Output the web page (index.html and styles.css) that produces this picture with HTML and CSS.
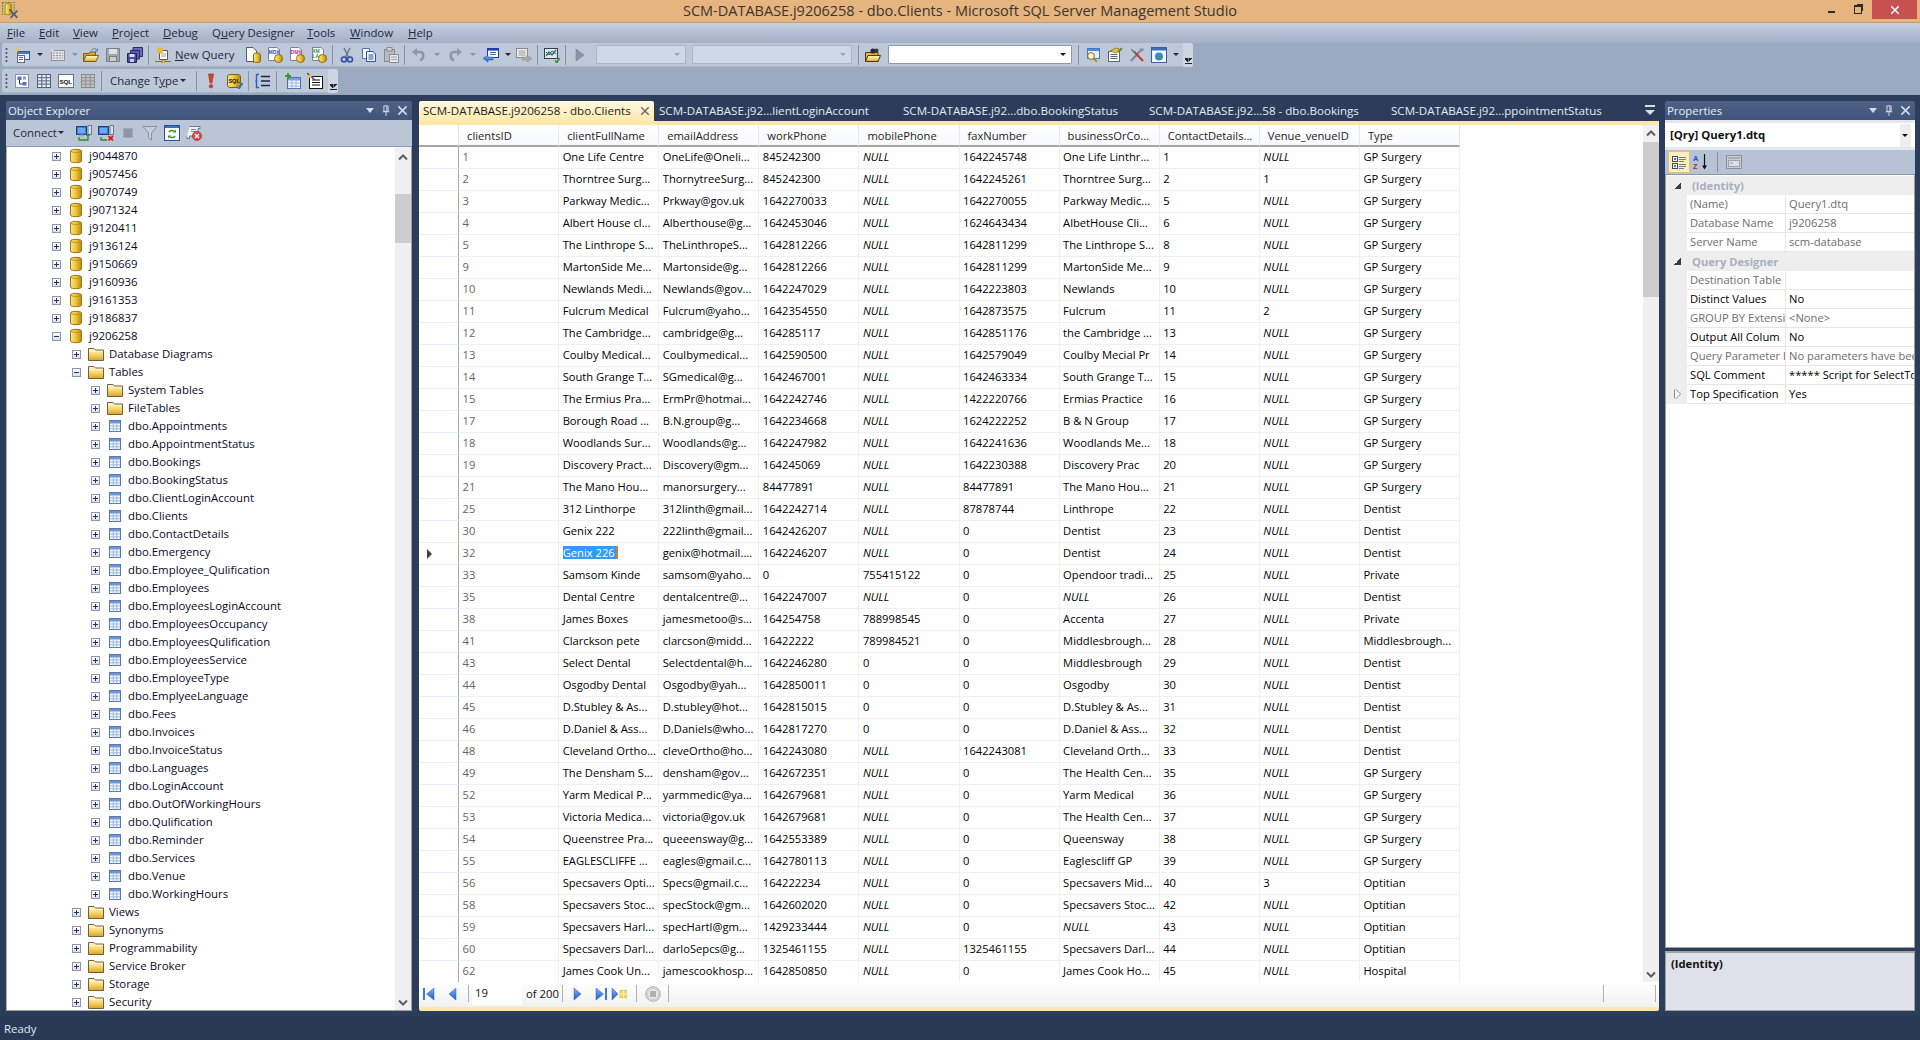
FILE: index.html
```html
<!DOCTYPE html>
<html lang="en">
<head>
<meta charset="utf-8">
<title>SCM-DATABASE.j9206258 - dbo.Clients - Microsoft SQL Server Management Studio</title>
<link rel="stylesheet" href="styles.css">
</head>
<body>
<svg class="defs" xmlns="http://www.w3.org/2000/svg">
<defs>
<linearGradient id="gDb" x1="0" x2="1" y1="0" y2="0"><stop offset="0" stop-color="#f9e88c"/><stop offset=".45" stop-color="#f0c83c"/><stop offset="1" stop-color="#b98a14"/></linearGradient>
<linearGradient id="gFold" x1="0" x2="0" y1="0" y2="1"><stop offset="0" stop-color="#fff8d8"/><stop offset=".5" stop-color="#f8d870"/><stop offset="1" stop-color="#d9a22a"/></linearGradient>
<linearGradient id="gBox" x1="0" x2="0" y1="0" y2="1"><stop offset="0" stop-color="#ffffff"/><stop offset="1" stop-color="#d8dde6"/></linearGradient>
<linearGradient id="gBlue" x1="0" x2="0" y1="0" y2="1"><stop offset="0" stop-color="#7fb0f0"/><stop offset="1" stop-color="#1f5fc8"/></linearGradient>
<symbol id="db" viewBox="0 0 16 16"><path d="M2.5 3C2.5 .8 13.5 .8 13.5 3V13C13.5 15.2 2.5 15.2 2.5 13Z" fill="url(#gDb)" stroke="#9a7818"/><path d="M3 3.2C4.5 5 11.5 5 13 3.2" fill="none" stroke="#b8921e" stroke-width=".8"/></symbol>
<symbol id="folder" viewBox="0 0 16 16"><path d="M.5 2.5H6L7.5 4H15.5V14.5H.5Z" fill="url(#gFold)" stroke="#6f6040"/><path d="M1.5 5.5H14.5" stroke="#fff6c8"/></symbol>
<symbol id="table" viewBox="0 0 16 16"><rect x="2.5" y="2.5" width="11" height="11" fill="#f4f8fe" stroke="#5478b4"/><rect x="3" y="3" width="10" height="2.5" fill="#6f96d6"/><path d="M3 8H13M3 10.8H13M6.3 5.5V13.5M9.8 5.5V13.5" stroke="#9db8e0"/></symbol>
<symbol id="plus" viewBox="0 0 9 9"><rect x=".5" y=".5" width="8" height="8" fill="url(#gBox)" stroke="#8c96a8"/><path d="M2 4.5H7M4.5 2V7" stroke="#25315c"/></symbol>
<symbol id="minus" viewBox="0 0 9 9"><rect x=".5" y=".5" width="8" height="8" fill="url(#gBox)" stroke="#8c96a8"/><path d="M2 4.5H7" stroke="#25315c"/></symbol>
<symbol id="appicon" viewBox="0 0 16 16"><rect x=".5" y=".5" width="11" height="11" fill="none" stroke="#4a9a2a" stroke-dasharray="1.5 1"/><path d="M3 2.5C3 1.3 9 1.3 9 2.5V11C9 12.3 3 12.3 3 11Z" fill="url(#gDb)" stroke="#9a7818" stroke-width=".7"/><path d="M7 7L14.5 15M14.5 8L8 15" stroke="#4f5f78" stroke-width="1.6"/></symbol>
<symbol id="newproj" viewBox="0 0 16 16"><rect x="3.5" y="4.5" width="12" height="8" fill="#e8eef8" stroke="#3a5a90"/><rect x="4" y="5" width="11" height="2" fill="#4a78c4"/><rect x="3.5" y="8.5" width="7" height="7" fill="#fff" stroke="#5c6c84"/><path d="M5 10.5H9M5 12.5H9" stroke="#5c6c84"/><path d="M3 0L4 2.5 6.5 3 4 4 3 6.5 2 4 0 3 2 2.5Z" fill="#f4c430"/></symbol>
<symbol id="gridbox" viewBox="0 0 16 16"><rect x="1.5" y="3.5" width="13" height="10" fill="#e8e8e8" stroke="#808080"/><path d="M3 6H13M3 8.5H13M3 11H13" stroke="#8a8a8a" stroke-dasharray="2 1"/><path d="M2 .5L3 2.5 5 3 3 4 2 5.5 1 4 0 3 1 2.5Z" fill="#d8d8d8"/></symbol>
<symbol id="open" viewBox="0 0 16 16"><path d="M.5 6.5H6L7 5H12.5V14.5H.5Z" fill="#d9a22a" stroke="#7a6020"/><path d="M.5 14.5L3 8.5H15.5L13 14.5Z" fill="url(#gFold)" stroke="#7a6020"/><path d="M8.5 3.5C10 1 13 1 14 3.5M14.5 1.5V4H12" fill="none" stroke="#5a7ab0"/></symbol>
<symbol id="save" viewBox="0 0 16 16"><path d="M1.5 1.5H14.5V14.5H1.5Z" fill="#9a9a9a" stroke="#666"/><rect x="4" y="2" width="8" height="5" fill="#e8e8e8"/><rect x="4.5" y="9.5" width="7" height="5" fill="#d0d0d0" stroke="#666"/></symbol>
<symbol id="saveall" viewBox="0 0 16 16"><path d="M6 .5H15.5V9.5H6Z" fill="#6a6ab8" stroke="#2a2a68"/><path d="M3.5 3.5H12.5V12H3.5Z" fill="#5a5ab0" stroke="#2a2a68"/><path d="M.5 6.5H9.5V15.5H.5Z" fill="#4a4a9c" stroke="#24245c"/><rect x="2.5" y="7" width="5" height="3" fill="#dfe2f2"/><rect x="3" y="12" width="4" height="3" fill="#c8cce4"/></symbol>
<symbol id="newq" viewBox="0 0 16 16"><path d="M4.5 3.5H12.5V12.5H4.5Z" fill="#fff" stroke="#5a5a5a"/><path d="M6 7H11M6 9H11" stroke="#9aa4b4"/><circle cx="5" cy="3.5" r="3" fill="#f4b820"/><path d="M0 14.5H16" stroke="#8a7424"/><rect x="7" y="13" width="3" height="3" fill="#e8c040" stroke="#8a7424" stroke-width=".5"/></symbol>
<symbol id="docdb" viewBox="0 0 16 16"><path d="M1.5 .5H8L11.5 4V14.5H1.5Z" fill="#fff" stroke="#4f5a70"/><path d="M8.5 15.5V7.5C8.5 5.6 15.5 5.6 15.5 7.5V14C15.5 16 8.5 16 8.5 14Z" fill="url(#gDb)" stroke="#8a6a10"/></symbol>
<symbol id="mdx" viewBox="0 0 16 16"><path d="M1.5 .5H10L12.5 3V13.5H1.5Z" fill="#fff" stroke="#7a8498"/><text x="1.6" y="6.5" font-size="5" font-weight="700" fill="#2a50c0" font-family="Liberation Sans">MDX</text><circle cx="11.5" cy="11.5" r="4" fill="url(#gDb)" stroke="#8a6a10"/></symbol>
<symbol id="dmx" viewBox="0 0 16 16"><path d="M1.5 .5H10L12.5 3V13.5H1.5Z" fill="#fff" stroke="#7a8498"/><text x="1.6" y="6.5" font-size="5" font-weight="700" fill="#b030b0" font-family="Liberation Sans">DMX</text><circle cx="11.5" cy="11.5" r="4" fill="url(#gDb)" stroke="#8a6a10"/></symbol>
<symbol id="xmla" viewBox="0 0 16 16"><path d="M1.5 .5H10L12.5 3V13.5H1.5Z" fill="#fff" stroke="#7a8498"/><text x="1.6" y="5.5" font-size="4.6" font-weight="700" fill="#2a9040" font-family="Liberation Sans">XM</text><text x="1.6" y="10.5" font-size="4.6" font-weight="700" fill="#2a9040" font-family="Liberation Sans">LA</text><circle cx="11.5" cy="11.5" r="4" fill="url(#gDb)" stroke="#8a6a10"/></symbol>
<symbol id="cut" viewBox="0 0 16 16"><path d="M5 1L9.5 10M11 1L6.5 10" stroke="#6a7488" stroke-width="1.5"/><circle cx="5" cy="12.5" r="2.5" fill="none" stroke="#2a50a8" stroke-width="1.6"/><circle cx="11" cy="12.5" r="2.5" fill="none" stroke="#2a50a8" stroke-width="1.6"/></symbol>
<symbol id="copy" viewBox="0 0 16 16"><path d="M1.5 1.5H8.5V11.5H1.5Z" fill="#fff" stroke="#4a72b8"/><path d="M5.5 4.5H12L14.5 7V14.5H5.5Z" fill="#f2f6fc" stroke="#2a54a0"/><path d="M7.5 8H12.5M7.5 10H12.5M7.5 12H12.5" stroke="#2a54a0"/></symbol>
<symbol id="paste" viewBox="0 0 16 16"><rect x="1.5" y="2.5" width="10" height="12" fill="#b8b8b8" stroke="#777"/><rect x="4" y=".5" width="5" height="3.5" fill="#d8d8d8" stroke="#777"/><path d="M6.5 7.5H15.5V15.5H6.5Z" fill="#f0f0f0" stroke="#777"/><path d="M8 10H14M8 12.5H14" stroke="#999"/></symbol>
<symbol id="undo" viewBox="0 0 16 16"><path d="M3 5H9.5C13 5 13.5 12 9 13" fill="none" stroke="#8e97a6" stroke-width="2.6"/><path d="M6 1V9L1 5Z" fill="#8e97a6"/></symbol>
<symbol id="redo" viewBox="0 0 16 16"><path d="M13 5H6.5C3 5 2.5 12 7 13" fill="none" stroke="#8e97a6" stroke-width="2.6"/><path d="M10 1V9L15 5Z" fill="#8e97a6"/></symbol>
<symbol id="res" viewBox="0 0 16 16"><rect x="4.5" y="1.5" width="11" height="9" fill="#fff" stroke="#1f3f9c"/><rect x="5" y="2" width="10" height="1.6" fill="#1f3f9c"/><path d="M7 5.5H13M7 7.5H13" stroke="#4a6ab8"/><path d="M0 11.5L5 8V10H10V13H5V15Z" fill="url(#gBlue)" stroke="#1f4fa0" stroke-width=".5"/></symbol>
<symbol id="res2" viewBox="0 0 16 16"><rect x=".5" y="1.5" width="11" height="9" fill="#eee" stroke="#888"/><path d="M2.5 4H9.5M2.5 6H9.5M2.5 8H9.5" stroke="#9a9a9a"/><path d="M16 11.5L11 8V10H6V13H11V15Z" fill="#a8a8a8" stroke="#888" stroke-width=".5"/></symbol>
<symbol id="chart" viewBox="0 0 16 16"><rect x=".5" y="1.5" width="13" height="10" fill="#dfe9f2" stroke="#3a3a5a"/><path d="M2 9L5 5 8 8 12 3" stroke="#2a8030" fill="none" stroke-width="1.4"/><path d="M2 5L5 8 8 4 12 7" stroke="#2a50a0" fill="none"/><path d="M11 13.5L13 15.5 15.5 11" stroke="#3a8a28" fill="none" stroke-width="1.6"/></symbol>
<symbol id="play" viewBox="0 0 16 16"><path d="M4 2L12 8 4 14Z" fill="#8794aa" stroke="#6e7b92" stroke-width=".5"/></symbol>
<symbol id="dbfolder" viewBox="0 0 16 16"><path d="M.5 5.5H13V14.5H.5Z" fill="#e3b23c" stroke="#4a3a14"/><path d="M.5 14.5L3 8.5H15.5L13 14.5Z" fill="url(#gFold)" stroke="#4a3a14"/><circle cx="8" cy="4" r="2.6" fill="#2a2a2a"/><circle cx="11.5" cy="3.5" r="2" fill="#3a3a3a"/></symbol>
<symbol id="find" viewBox="0 0 16 16"><rect x="2.5" y="1.5" width="12" height="10" fill="#e6eefa" stroke="#4a78c4"/><rect x="3" y="2" width="11" height="2" fill="#4a8ce0"/><circle cx="6" cy="9" r="3.4" fill="#fdf5c8" stroke="#7a6a2a"/><path d="M8.5 11.5L12 15" stroke="#b8901e" stroke-width="1.8"/></symbol>
<symbol id="props" viewBox="0 0 16 16"><rect x="1.5" y="4.5" width="11" height="10" fill="#fff" stroke="#5a6478"/><path d="M3.5 7.5H10.5M3.5 9.5H10.5M3.5 11.5H10.5" stroke="#5a6478"/><path d="M3 4L9 1 14.5 3 9 6Z" fill="#e8c030" stroke="#7a6a20" stroke-width=".7"/><path d="M11 5L15 1" stroke="#3a8a28" stroke-width="1.4"/></symbol>
<symbol id="tools" viewBox="0 0 16 16"><path d="M2 14L11 4" stroke="#7c8698" stroke-width="2"/><path d="M10 2.5C11.5 .5 15 1 15 3L12.5 5 11 4.5Z" fill="#8a94a6"/><path d="M14 14L5 4.5" stroke="#c03a2a" stroke-width="2"/><path d="M2 2L6 5 5 6Z" fill="#6e7888" stroke="#6e7888"/></symbol>
<symbol id="globe" viewBox="0 0 16 16"><rect x=".5" y=".5" width="15" height="15" fill="#f4f8fe" stroke="#36619c"/><rect x="1" y="1" width="14" height="2.5" fill="#3a6cc0"/><circle cx="8" cy="9.5" r="4" fill="#3a88d8"/><path d="M6 7.5C8 7 9 9 7.5 10.5 6.5 11.5 8 13 9 13L11 10Z" fill="#3aa038"/></symbol>
<symbol id="diagram" viewBox="0 0 16 16"><rect x="1.5" y="1.5" width="13" height="13" fill="#fff" stroke="#8a94a8"/><rect x="3.5" y="3.5" width="4" height="3.5" fill="#4a78c8"/><rect x="8.5" y="9" width="4" height="3.5" fill="#4a78c8"/><rect x="9" y="3.5" width="3" height="3" fill="#7aa0de"/><path d="M5.5 7V11H8.5" stroke="#334" fill="none"/></symbol>
<symbol id="gridlines" viewBox="0 0 16 16"><rect x="1.5" y="1.5" width="13" height="13" fill="#e6edf8" stroke="#55607a"/><path d="M1.5 4.7H14.5M1.5 7.9H14.5M1.5 11.1H14.5M5.8 1.5V14.5M10.2 1.5V14.5" stroke="#55607a"/></symbol>
<symbol id="sqlbox" viewBox="0 0 16 16"><rect x=".5" y="1.5" width="15" height="13" fill="#fff" stroke="#6a7488"/><text x="1.4" y="10.5" font-size="6.2" font-weight="700" fill="#111" font-family="Liberation Sans">SQL</text></symbol>
<symbol id="gridgrey" viewBox="0 0 16 16"><rect x="1.5" y="1.5" width="13" height="13" fill="#c4c4c4" stroke="#8a8a8a"/><path d="M1.5 4.7H14.5M1.5 7.9H14.5M1.5 11.1H14.5M5.8 1.5V14.5M10.2 1.5V14.5" stroke="#8f8f8f"/></symbol>
<symbol id="bang" viewBox="0 0 16 16"><path d="M5.5 1H10.5L9 10H7Z" fill="#d8402a" stroke="#a02a1a" stroke-width=".6"/><circle cx="8" cy="13.2" r="1.8" fill="#d8402a" stroke="#a02a1a" stroke-width=".5"/></symbol>
<symbol id="sqlcheck" viewBox="0 0 16 16"><rect x=".5" y="1.5" width="13" height="13" rx="2.5" fill="url(#gDb)" stroke="#7a6218"/><text x="1.4" y="10" font-size="5.6" font-weight="700" fill="#111" font-family="Liberation Sans">SQL</text><path d="M10 13L12 15.5 15.5 10" fill="none" stroke="#3a70c8" stroke-width="1.8"/></symbol>
<symbol id="brk" viewBox="0 0 16 16"><path d="M4 1.5H1.5V14.5H4" fill="none" stroke="#2a60c0" stroke-width="1.4"/><path d="M1 8H0" stroke="#2a60c0"/><path d="M6 3.5H15M6 8H15M6 12.5H15" stroke="#15254a" stroke-width="1.4"/></symbol>
<symbol id="addtbl" viewBox="0 0 16 16"><rect x="2.5" y="4.5" width="13" height="11" fill="#f2f7fe" stroke="#4a72b0"/><rect x="3" y="5" width="12" height="2.5" fill="#7aa0dc"/><path d="M3 10H15M3 13H15M7 7.5V15.5M11 7.5V15.5" stroke="#9ab6e0"/><path d="M3 0V6M0 3H6" stroke="#3a9a28" stroke-width="2"/></symbol>
<symbol id="wand" viewBox="0 0 16 16"><rect x="2.5" y="3.5" width="13" height="12" fill="#fff" stroke="#111"/><path d="M5 7H13M5 9.5H13M5 12H13" stroke="#111" stroke-width="1.2"/><path d="M0 0L8 7" stroke="#2a50a8" stroke-width="1.5"/><path d="M3 .5L4 2.5 6 3 4 4 3 6 2 4 0 3 2 2.5Z" fill="#f4c420"/></symbol>
<symbol id="conn" viewBox="0 0 16 16"><rect x=".5" y="1.5" width="10" height="8" fill="#3a80e0" stroke="#1f3f78"/><rect x="2" y="3" width="7" height="5" fill="#6aa8f0"/><rect x="3" y="9.5" width="5" height="2" fill="#98a4b8"/><rect x="12" y=".5" width="3.5" height="9" fill="#d8dee8" stroke="#6e7a90"/><path d="M3 12V15H12V10" fill="none" stroke="#2a8c20" stroke-width="1.3"/><path d="M10 11L12 8.5 14 11" fill="#2a8c20"/></symbol>
<symbol id="disc" viewBox="0 0 16 16"><rect x=".5" y="1.5" width="10" height="8" fill="#3a80e0" stroke="#1f3f78"/><rect x="2" y="3" width="7" height="5" fill="#6aa8f0"/><rect x="12" y=".5" width="3.5" height="9" fill="#d8dee8" stroke="#6e7a90"/><path d="M3 12V15H9" fill="none" stroke="#2a8c20" stroke-width="1.3"/><path d="M10.5 11L15 15.5M15 11L10.5 15.5" stroke="#d8201a" stroke-width="1.8"/></symbol>
<symbol id="stopsq" viewBox="0 0 16 16"><rect x="3.5" y="3.5" width="9" height="9" fill="#8c96a6" stroke="#a0a9b8"/></symbol>
<symbol id="funnel" viewBox="0 0 16 16"><path d="M1 1.5H15L9.5 8V15L6.5 13V8Z" fill="#c8ced8" stroke="#8a919e"/></symbol>
<symbol id="refresh" viewBox="0 0 16 16"><rect x=".5" y=".5" width="15" height="15" fill="#f6f9fe" stroke="#2a5090"/><rect x="1" y="1" width="14" height="2" fill="#3a70c0"/><path d="M5 7C6 5 9 5 10.5 6.5M11 11C10 13 7 13 5.5 11.5" fill="none" stroke="#3a9a20" stroke-width="1.6"/><path d="M9 7.5H12V4.5ZM7 10.5H4V13.5Z" fill="#3a9a20"/></symbol>
<symbol id="scrollx" viewBox="0 0 16 16"><path d="M3.5 1.5H14V3.5H12V11H3.5V13.5H1V11.5" fill="#eef1f6" stroke="#6e7a90"/><path d="M5 4.5H10M5 6.5H10" stroke="#7a869c"/><circle cx="11" cy="11" r="4.6" fill="#d84a4a" stroke="#903030" stroke-width=".6"/><path d="M9 9L13 13M13 9L9 13" stroke="#fff" stroke-width="1.3"/></symbol>
<symbol id="cats" viewBox="0 0 16 16"><rect x="1.5" y="2.5" width="5" height="5" fill="#fff" stroke="#3a4a6a"/><rect x="1.5" y="9.5" width="5" height="5" fill="#fff" stroke="#3a4a6a"/><path d="M3 5H5M4 3.8V6.2M3 12H5M4 10.8V13.2" stroke="#1f3f9c"/><path d="M8 3.5H15M8 5.5H15M8 7.5H13M8 10.5H15M8 12.5H15M8 14.5H13" stroke="#707a8e"/></symbol>
<symbol id="az" viewBox="0 0 16 16"><text x="0" y="7" font-size="7.5" font-weight="700" fill="#2a50c0" font-family="Liberation Sans">A</text><text x="0" y="15" font-size="7.5" font-weight="700" fill="#b02a30" font-family="Liberation Sans">Z</text><path d="M11.5 0V14" stroke="#111" stroke-width="1.2"/><path d="M9 11.5L11.5 15.5 14 11.5Z" fill="#111"/></symbol>
<symbol id="page" viewBox="0 0 16 16"><rect x=".5" y="1.5" width="15" height="13" fill="#c9cdd4" stroke="#8a8f98"/><rect x="2" y="3" width="12" height="2" fill="#a8adb6"/><rect x="2.5" y="6.5" width="11" height="6" fill="#dcdfe4" stroke="#9a9fa8"/><path d="M4 9H7" stroke="#8a8f98"/></symbol>
<symbol id="first" viewBox="0 0 16 16"><rect x="2" y="2" width="2" height="12" fill="#3a7ae0"/><path d="M13 2V14L5.5 8Z" fill="url(#gBlue)" stroke="#2a5cb8" stroke-width=".5"/></symbol>
<symbol id="prev" viewBox="0 0 16 16"><path d="M11 2V14L4 8Z" fill="url(#gBlue)" stroke="#2a5cb8" stroke-width=".5"/></symbol>
<symbol id="next" viewBox="0 0 16 16"><path d="M5 2V14L12 8Z" fill="url(#gBlue)" stroke="#2a5cb8" stroke-width=".5"/></symbol>
<symbol id="last" viewBox="0 0 16 16"><path d="M3 2V14L10.5 8Z" fill="url(#gBlue)" stroke="#2a5cb8" stroke-width=".5"/><rect x="12" y="2" width="2" height="12" fill="#3a7ae0"/></symbol>
<symbol id="newrow" viewBox="0 0 16 16"><path d="M1 2V14L7 8Z" fill="url(#gBlue)" stroke="#2a5cb8" stroke-width=".5"/><rect x="9" y="4.5" width="7" height="7" fill="#f4d860" stroke="#e8c840"/><path d="M9 8H16M12.5 4.5V11.5" stroke="#fff6c0"/></symbol>
<symbol id="stopc" viewBox="0 0 16 16"><circle cx="8" cy="8" r="7.3" fill="#e4e4e4" stroke="#a8a8a8"/><circle cx="8" cy="8" r="5.4" fill="#ececec" stroke="#c4c4c4"/><rect x="5" y="5" width="6" height="6" fill="#b0b0b0"/></symbol>
<symbol id="chev" viewBox="0 0 16 16"><path d="M4 10.5L8 6.5 12 10.5" fill="none" stroke="#5f5f5f" stroke-width="2"/></symbol>
<symbol id="chevd" viewBox="0 0 16 16"><path d="M4 6.5L8 10.5 12 6.5" fill="none" stroke="#5f5f5f" stroke-width="2"/></symbol>
<symbol id="pin" viewBox="0 0 12 14"><path d="M3.5 1.5H8.5V8H3.5ZM2 8.5H10M6 9V13.5M7 2V8" fill="none" stroke="currentColor" stroke-width="1.2"/></symbol>
<symbol id="closex" viewBox="0 0 12 12"><path d="M1.5 1.5L10.5 10.5M10.5 1.5L1.5 10.5" stroke="currentColor" stroke-width="1.7"/></symbol>
</defs>
</svg>

<header class="titlebar">
  <svg class="appicon"><use href="#appicon"/></svg>
  <div class="title">SCM-DATABASE.j9206258 - dbo.Clients - Microsoft SQL Server Management Studio</div>
  <div class="winctl">
    <span class="wmin"></span>
    <span class="wmax"></span>
    <span class="wclose"><svg class="i10"><use href="#closex"/></svg></span>
  </div>
</header>

<nav class="menubar">
  <span class="mi m1"><u>F</u>ile</span>
  <span class="mi m2"><u>E</u>dit</span>
  <span class="mi m3"><u>V</u>iew</span>
  <span class="mi m4"><u>P</u>roject</span>
  <span class="mi m5"><u>D</u>ebug</span>
  <span class="mi m6">Q<u>u</u>ery Designer</span>
  <span class="mi m7"><u>T</u>ools</span>
  <span class="mi m8"><u>W</u>indow</span>
  <span class="mi m9"><u>H</u>elp</span>
</nav>

<section class="toolarea">
  <div class="toolbar tb1">
    <span class="grip"></span>
    <span class="btn"><svg class="i16"><use href="#newproj"/></svg></span><span class="arr"></span>
    <span class="btn dis"><svg class="i16"><use href="#gridbox"/></svg></span><span class="arr narrow off"></span>
    <span class="btn"><svg class="i16"><use href="#open"/></svg></span>
    <span class="btn dis"><svg class="i16"><use href="#save"/></svg></span>
    <span class="btn"><svg class="i16"><use href="#saveall"/></svg></span>
    <span class="sep"></span>
    <span class="btn"><svg class="i16"><use href="#newq"/></svg></span>
    <span class="tlabel newq"><u>N</u>ew Query</span>
    <span class="btn"><svg class="i16"><use href="#docdb"/></svg></span>
    <span class="btn"><svg class="i16"><use href="#mdx"/></svg></span>
    <span class="btn"><svg class="i16"><use href="#dmx"/></svg></span>
    <span class="btn"><svg class="i16"><use href="#xmla"/></svg></span>
    <span class="sep"></span>
    <span class="btn"><svg class="i16"><use href="#cut"/></svg></span>
    <span class="btn"><svg class="i16"><use href="#copy"/></svg></span>
    <span class="btn dis"><svg class="i16"><use href="#paste"/></svg></span>
    <span class="sep"></span>
    <span class="btn"><svg class="i16"><use href="#undo"/></svg></span><span class="arr off"></span>
    <span class="btn"><svg class="i16"><use href="#redo"/></svg></span><span class="arr off"></span>
    <span class="btn"><svg class="i16"><use href="#res"/></svg></span><span class="arr narrow"></span>
    <span class="btn"><svg class="i16"><use href="#res2"/></svg></span>
    <span class="sep"></span>
    <span class="btn"><svg class="i16"><use href="#chart"/></svg></span>
    <span class="sep"></span>
    <span class="btn"><svg class="i16"><use href="#play"/></svg></span>
    <span class="combo c1"><span class="carr off"></span></span>
    <span class="combo c2"><span class="carr off"></span></span>
    <span class="sep"></span>
    <span class="btn"><svg class="i16"><use href="#dbfolder"/></svg></span>
    <span class="combo c3"><span class="carr"></span></span>
    <span class="sep"></span>
    <span class="btn"><svg class="i16"><use href="#find"/></svg></span>
    <span class="btn"><svg class="i16"><use href="#props"/></svg></span>
    <span class="btn"><svg class="i16"><use href="#tools"/></svg></span>
    <span class="btn"><svg class="i16"><use href="#globe"/></svg></span><span class="arr narrow"></span>
    <span class="chevend"></span>
  </div>
  <div class="toolbar tb2">
    <span class="grip"></span>
    <span class="btn"><svg class="i16"><use href="#diagram"/></svg></span>
    <span class="btn"><svg class="i16"><use href="#gridlines"/></svg></span>
    <span class="btn"><svg class="i16"><use href="#sqlbox"/></svg></span>
    <span class="btn"><svg class="i16"><use href="#gridgrey"/></svg></span>
    <span class="sep"></span>
    <span class="tlabel ctype">Change T<u>y</u>pe<span class="arr inl"></span></span>
    <span class="sep"></span>
    <span class="btn"><svg class="i16"><use href="#bang"/></svg></span>
    <span class="btn gapl"><svg class="i16"><use href="#sqlcheck"/></svg></span>
    <span class="sep"></span>
    <span class="btn"><svg class="i16"><use href="#brk"/></svg></span>
    <span class="sep"></span>
    <span class="btn gapl"><svg class="i16"><use href="#addtbl"/></svg></span>
    <span class="btn"><svg class="i16"><use href="#wand"/></svg></span>
    <span class="chevend"></span>
  </div>
</section>

<main class="dock">
  <aside class="panel oe">
    <div class="phead"><span class="ptitle">Object Explorer</span><span class="pctl"><span class="darr"></span><svg class="ipin"><use href="#pin"/></svg><svg class="ix"><use href="#closex"/></svg></span></div>
    <div class="ptools">
      <span class="tlabel conn">Connect<span class="arr inl"></span></span>
      <span class="pbtn"><svg class="i16"><use href="#conn"/></svg></span>
      <span class="pbtn"><svg class="i16"><use href="#disc"/></svg></span>
      <span class="pbtn"><svg class="i16"><use href="#stopsq"/></svg></span>
      <span class="pbtn"><svg class="i16"><use href="#funnel"/></svg></span>
      <span class="pbtn"><svg class="i16"><use href="#refresh"/></svg></span>
      <span class="pbtn"><svg class="i16"><use href="#scrollx"/></svg></span>
    </div>
    <div class="treewrap">
      <div class="tree">
        <div class="tr d1"><svg class="exp"><use href="#plus"/></svg><svg class="i16"><use href="#db"/></svg><span>j9044870</span></div>
        <div class="tr d1"><svg class="exp"><use href="#plus"/></svg><svg class="i16"><use href="#db"/></svg><span>j9057456</span></div>
        <div class="tr d1"><svg class="exp"><use href="#plus"/></svg><svg class="i16"><use href="#db"/></svg><span>j9070749</span></div>
        <div class="tr d1"><svg class="exp"><use href="#plus"/></svg><svg class="i16"><use href="#db"/></svg><span>j9071324</span></div>
        <div class="tr d1"><svg class="exp"><use href="#plus"/></svg><svg class="i16"><use href="#db"/></svg><span>j9120411</span></div>
        <div class="tr d1"><svg class="exp"><use href="#plus"/></svg><svg class="i16"><use href="#db"/></svg><span>j9136124</span></div>
        <div class="tr d1"><svg class="exp"><use href="#plus"/></svg><svg class="i16"><use href="#db"/></svg><span>j9150669</span></div>
        <div class="tr d1"><svg class="exp"><use href="#plus"/></svg><svg class="i16"><use href="#db"/></svg><span>j9160936</span></div>
        <div class="tr d1"><svg class="exp"><use href="#plus"/></svg><svg class="i16"><use href="#db"/></svg><span>j9161353</span></div>
        <div class="tr d1"><svg class="exp"><use href="#plus"/></svg><svg class="i16"><use href="#db"/></svg><span>j9186837</span></div>
        <div class="tr d1"><svg class="exp"><use href="#minus"/></svg><svg class="i16"><use href="#db"/></svg><span>j9206258</span></div>
        <div class="tr d2"><svg class="exp"><use href="#plus"/></svg><svg class="i16"><use href="#folder"/></svg><span>Database Diagrams</span></div>
        <div class="tr d2"><svg class="exp"><use href="#minus"/></svg><svg class="i16"><use href="#folder"/></svg><span>Tables</span></div>
        <div class="tr d3"><svg class="exp"><use href="#plus"/></svg><svg class="i16"><use href="#folder"/></svg><span>System Tables</span></div>
        <div class="tr d3"><svg class="exp"><use href="#plus"/></svg><svg class="i16"><use href="#folder"/></svg><span>FileTables</span></div>
        <div class="tr d3"><svg class="exp"><use href="#plus"/></svg><svg class="i16"><use href="#table"/></svg><span>dbo.Appointments</span></div>
        <div class="tr d3"><svg class="exp"><use href="#plus"/></svg><svg class="i16"><use href="#table"/></svg><span>dbo.AppointmentStatus</span></div>
        <div class="tr d3"><svg class="exp"><use href="#plus"/></svg><svg class="i16"><use href="#table"/></svg><span>dbo.Bookings</span></div>
        <div class="tr d3"><svg class="exp"><use href="#plus"/></svg><svg class="i16"><use href="#table"/></svg><span>dbo.BookingStatus</span></div>
        <div class="tr d3"><svg class="exp"><use href="#plus"/></svg><svg class="i16"><use href="#table"/></svg><span>dbo.ClientLoginAccount</span></div>
        <div class="tr d3"><svg class="exp"><use href="#plus"/></svg><svg class="i16"><use href="#table"/></svg><span>dbo.Clients</span></div>
        <div class="tr d3"><svg class="exp"><use href="#plus"/></svg><svg class="i16"><use href="#table"/></svg><span>dbo.ContactDetails</span></div>
        <div class="tr d3"><svg class="exp"><use href="#plus"/></svg><svg class="i16"><use href="#table"/></svg><span>dbo.Emergency</span></div>
        <div class="tr d3"><svg class="exp"><use href="#plus"/></svg><svg class="i16"><use href="#table"/></svg><span>dbo.Employee_Qulification</span></div>
        <div class="tr d3"><svg class="exp"><use href="#plus"/></svg><svg class="i16"><use href="#table"/></svg><span>dbo.Employees</span></div>
        <div class="tr d3"><svg class="exp"><use href="#plus"/></svg><svg class="i16"><use href="#table"/></svg><span>dbo.EmployeesLoginAccount</span></div>
        <div class="tr d3"><svg class="exp"><use href="#plus"/></svg><svg class="i16"><use href="#table"/></svg><span>dbo.EmployeesOccupancy</span></div>
        <div class="tr d3"><svg class="exp"><use href="#plus"/></svg><svg class="i16"><use href="#table"/></svg><span>dbo.EmployeesQulification</span></div>
        <div class="tr d3"><svg class="exp"><use href="#plus"/></svg><svg class="i16"><use href="#table"/></svg><span>dbo.EmployeesService</span></div>
        <div class="tr d3"><svg class="exp"><use href="#plus"/></svg><svg class="i16"><use href="#table"/></svg><span>dbo.EmployeeType</span></div>
        <div class="tr d3"><svg class="exp"><use href="#plus"/></svg><svg class="i16"><use href="#table"/></svg><span>dbo.EmplyeeLanguage</span></div>
        <div class="tr d3"><svg class="exp"><use href="#plus"/></svg><svg class="i16"><use href="#table"/></svg><span>dbo.Fees</span></div>
        <div class="tr d3"><svg class="exp"><use href="#plus"/></svg><svg class="i16"><use href="#table"/></svg><span>dbo.Invoices</span></div>
        <div class="tr d3"><svg class="exp"><use href="#plus"/></svg><svg class="i16"><use href="#table"/></svg><span>dbo.InvoiceStatus</span></div>
        <div class="tr d3"><svg class="exp"><use href="#plus"/></svg><svg class="i16"><use href="#table"/></svg><span>dbo.Languages</span></div>
        <div class="tr d3"><svg class="exp"><use href="#plus"/></svg><svg class="i16"><use href="#table"/></svg><span>dbo.LoginAccount</span></div>
        <div class="tr d3"><svg class="exp"><use href="#plus"/></svg><svg class="i16"><use href="#table"/></svg><span>dbo.OutOfWorkingHours</span></div>
        <div class="tr d3"><svg class="exp"><use href="#plus"/></svg><svg class="i16"><use href="#table"/></svg><span>dbo.Qulification</span></div>
        <div class="tr d3"><svg class="exp"><use href="#plus"/></svg><svg class="i16"><use href="#table"/></svg><span>dbo.Reminder</span></div>
        <div class="tr d3"><svg class="exp"><use href="#plus"/></svg><svg class="i16"><use href="#table"/></svg><span>dbo.Services</span></div>
        <div class="tr d3"><svg class="exp"><use href="#plus"/></svg><svg class="i16"><use href="#table"/></svg><span>dbo.Venue</span></div>
        <div class="tr d3"><svg class="exp"><use href="#plus"/></svg><svg class="i16"><use href="#table"/></svg><span>dbo.WorkingHours</span></div>
        <div class="tr d2"><svg class="exp"><use href="#plus"/></svg><svg class="i16"><use href="#folder"/></svg><span>Views</span></div>
        <div class="tr d2"><svg class="exp"><use href="#plus"/></svg><svg class="i16"><use href="#folder"/></svg><span>Synonyms</span></div>
        <div class="tr d2"><svg class="exp"><use href="#plus"/></svg><svg class="i16"><use href="#folder"/></svg><span>Programmability</span></div>
        <div class="tr d2"><svg class="exp"><use href="#plus"/></svg><svg class="i16"><use href="#folder"/></svg><span>Service Broker</span></div>
        <div class="tr d2"><svg class="exp"><use href="#plus"/></svg><svg class="i16"><use href="#folder"/></svg><span>Storage</span></div>
        <div class="tr d2"><svg class="exp"><use href="#plus"/></svg><svg class="i16"><use href="#folder"/></svg><span>Security</span></div>
      </div>
      <div class="sbar sb-oe"><svg class="i16"><use href="#chev"/></svg><span class="thumb"></span><span class="grow"></span><svg class="i16"><use href="#chevd"/></svg></div>
    </div>
  </aside>

  <section class="doc">
    <div class="tabs">
      <div class="tab active"><span>SCM-DATABASE.j9206258 - dbo.Clients</span><svg class="tabx"><use href="#closex"/></svg></div>
      <div class="tab">SCM-DATABASE.j92...lientLoginAccount</div>
      <div class="tab">SCM-DATABASE.j92...dbo.BookingStatus</div>
      <div class="tab">SCM-DATABASE.j92...58 - dbo.Bookings</div>
      <div class="tab">SCM-DATABASE.j92...ppointmentStatus</div>
      <span class="tabmenu"></span>
    </div>
    <div class="band"></div>
    <div class="gridwrap">
      <div class="gridscroll">
        <table class="grid">
          <thead><tr><th class="rh"></th><th>clientsID</th><th>clientFullName</th><th>emailAddress</th><th>workPhone</th><th>mobilePhone</th><th>faxNumber</th><th>businessOrCo...</th><th>ContactDetails...</th><th>Venue_venueID</th><th>Type</th></tr></thead>
          <tbody>
            <tr><td class="rh"></td><td class="id">1</td><td>One Life Centre</td><td>OneLife@Oneli...</td><td>845242300</td><td class="n">NULL</td><td>1642245748</td><td>One Life Linthr...</td><td>1</td><td class="n">NULL</td><td>GP Surgery</td></tr>
            <tr><td class="rh"></td><td class="id">2</td><td>Thorntree Surg...</td><td>ThornytreeSurg...</td><td>845242300</td><td class="n">NULL</td><td>1642245261</td><td>Thorntree Surg...</td><td>2</td><td>1</td><td>GP Surgery</td></tr>
            <tr><td class="rh"></td><td class="id">3</td><td>Parkway Medic...</td><td>Prkway@gov.uk</td><td>1642270033</td><td class="n">NULL</td><td>1642270055</td><td>Parkway Medic...</td><td>5</td><td class="n">NULL</td><td>GP Surgery</td></tr>
            <tr><td class="rh"></td><td class="id">4</td><td>Albert House cl...</td><td>Alberthouse@g...</td><td>1642453046</td><td class="n">NULL</td><td>1624643434</td><td>AlbetHouse Cli...</td><td>6</td><td class="n">NULL</td><td>GP Surgery</td></tr>
            <tr><td class="rh"></td><td class="id">5</td><td>The Linthrope S...</td><td>TheLinthropeS...</td><td>1642812266</td><td class="n">NULL</td><td>1642811299</td><td>The Linthrope S...</td><td>8</td><td class="n">NULL</td><td>GP Surgery</td></tr>
            <tr><td class="rh"></td><td class="id">9</td><td>MartonSide Me...</td><td>Martonside@g...</td><td>1642812266</td><td class="n">NULL</td><td>1642811299</td><td>MartonSide Me...</td><td>9</td><td class="n">NULL</td><td>GP Surgery</td></tr>
            <tr><td class="rh"></td><td class="id">10</td><td>Newlands Medi...</td><td>Newlands@gov...</td><td>1642247029</td><td class="n">NULL</td><td>1642223803</td><td>Newlands</td><td>10</td><td class="n">NULL</td><td>GP Surgery</td></tr>
            <tr><td class="rh"></td><td class="id">11</td><td>Fulcrum Medical</td><td>Fulcrum@yaho...</td><td>1642354550</td><td class="n">NULL</td><td>1642873575</td><td>Fulcrum</td><td>11</td><td>2</td><td>GP Surgery</td></tr>
            <tr><td class="rh"></td><td class="id">12</td><td>The Cambridge...</td><td>cambridge@g...</td><td>164285117</td><td class="n">NULL</td><td>1642851176</td><td>the Cambridge ...</td><td>13</td><td class="n">NULL</td><td>GP Surgery</td></tr>
            <tr><td class="rh"></td><td class="id">13</td><td>Coulby Medical...</td><td>Coulbymedical...</td><td>1642590500</td><td class="n">NULL</td><td>1642579049</td><td>Coulby Mecial Pr</td><td>14</td><td class="n">NULL</td><td>GP Surgery</td></tr>
            <tr><td class="rh"></td><td class="id">14</td><td>South Grange T...</td><td>SGmedical@g...</td><td>1642467001</td><td class="n">NULL</td><td>1642463334</td><td>South Grange T...</td><td>15</td><td class="n">NULL</td><td>GP Surgery</td></tr>
            <tr><td class="rh"></td><td class="id">15</td><td>The Ermius Pra...</td><td>ErmPr@hotmai...</td><td>1642242746</td><td class="n">NULL</td><td>1422220766</td><td>Ermias Practice</td><td>16</td><td class="n">NULL</td><td>GP Surgery</td></tr>
            <tr><td class="rh"></td><td class="id">17</td><td>Borough Road ...</td><td>B.N.group@g...</td><td>1642234668</td><td class="n">NULL</td><td>1624222252</td><td>B &amp; N Group</td><td>17</td><td class="n">NULL</td><td>GP Surgery</td></tr>
            <tr><td class="rh"></td><td class="id">18</td><td>Woodlands Sur...</td><td>Woodlands@g...</td><td>1642247982</td><td class="n">NULL</td><td>1642241636</td><td>Woodlands Me...</td><td>18</td><td class="n">NULL</td><td>GP Surgery</td></tr>
            <tr><td class="rh"></td><td class="id">19</td><td>Discovery Pract...</td><td>Discovery@gm...</td><td>164245069</td><td class="n">NULL</td><td>1642230388</td><td>Discovery Prac</td><td>20</td><td class="n">NULL</td><td>GP Surgery</td></tr>
            <tr><td class="rh"></td><td class="id">21</td><td>The Mano Hou...</td><td>manorsurgery...</td><td>84477891</td><td class="n">NULL</td><td>84477891</td><td>The Mano Hou...</td><td>21</td><td class="n">NULL</td><td>GP Surgery</td></tr>
            <tr><td class="rh"></td><td class="id">25</td><td>312 Linthorpe</td><td>312linth@gmail...</td><td>1642242714</td><td class="n">NULL</td><td>87878744</td><td>Linthrope</td><td>22</td><td class="n">NULL</td><td>Dentist</td></tr>
            <tr><td class="rh"></td><td class="id">30</td><td>Genix 222</td><td>222linth@gmail...</td><td>1642426207</td><td class="n">NULL</td><td>0</td><td>Dentist</td><td>23</td><td class="n">NULL</td><td>Dentist</td></tr>
            <tr><td class="rh cur"><span class="rowarrow"></span></td><td class="id">32</td><td><span class="sel">Genix 226</span></td><td>genix@hotmail....</td><td>1642246207</td><td class="n">NULL</td><td>0</td><td>Dentist</td><td>24</td><td class="n">NULL</td><td>Dentist</td></tr>
            <tr><td class="rh"></td><td class="id">33</td><td>Samsom Kinde</td><td>samsom@yaho...</td><td>0</td><td>755415122</td><td>0</td><td>Opendoor tradi...</td><td>25</td><td class="n">NULL</td><td>Private</td></tr>
            <tr><td class="rh"></td><td class="id">35</td><td>Dental Centre</td><td>dentalcentre@...</td><td>1642247007</td><td class="n">NULL</td><td>0</td><td class="n">NULL</td><td>26</td><td class="n">NULL</td><td>Dentist</td></tr>
            <tr><td class="rh"></td><td class="id">38</td><td>James Boxes</td><td>jamesmetoo@s...</td><td>164254758</td><td>788998545</td><td>0</td><td>Accenta</td><td>27</td><td class="n">NULL</td><td>Private</td></tr>
            <tr><td class="rh"></td><td class="id">41</td><td>Clarckson pete</td><td>clarcson@midd...</td><td>16422222</td><td>789984521</td><td>0</td><td>Middlesbrough...</td><td>28</td><td class="n">NULL</td><td>Middlesbrough...</td></tr>
            <tr><td class="rh"></td><td class="id">43</td><td>Select Dental</td><td>Selectdental@h...</td><td>1642246280</td><td>0</td><td>0</td><td>Middlesbrough</td><td>29</td><td class="n">NULL</td><td>Dentist</td></tr>
            <tr><td class="rh"></td><td class="id">44</td><td>Osgodby Dental</td><td>Osgodby@yah...</td><td>1642850011</td><td>0</td><td>0</td><td>Osgodby</td><td>30</td><td class="n">NULL</td><td>Dentist</td></tr>
            <tr><td class="rh"></td><td class="id">45</td><td>D.Stubley &amp; As...</td><td>D.stubley@hot...</td><td>1642815015</td><td>0</td><td>0</td><td>D.Stubley &amp; As...</td><td>31</td><td class="n">NULL</td><td>Dentist</td></tr>
            <tr><td class="rh"></td><td class="id">46</td><td>D.Daniel &amp; Ass...</td><td>D.Daniels@who...</td><td>1642817270</td><td>0</td><td>0</td><td>D.Daniel &amp; Ass...</td><td>32</td><td class="n">NULL</td><td>Dentist</td></tr>
            <tr><td class="rh"></td><td class="id">48</td><td>Cleveland Ortho...</td><td>cleveOrtho@ho...</td><td>1642243080</td><td class="n">NULL</td><td>1642243081</td><td>Cleveland Orth...</td><td>33</td><td class="n">NULL</td><td>Dentist</td></tr>
            <tr><td class="rh"></td><td class="id">49</td><td>The Densham S...</td><td>densham@gov...</td><td>1642672351</td><td class="n">NULL</td><td>0</td><td>The Health Cen...</td><td>35</td><td class="n">NULL</td><td>GP Surgery</td></tr>
            <tr><td class="rh"></td><td class="id">52</td><td>Yarm Medical P...</td><td>yarmmedic@ya...</td><td>1642679681</td><td class="n">NULL</td><td>0</td><td>Yarm Medical</td><td>36</td><td class="n">NULL</td><td>GP Surgery</td></tr>
            <tr><td class="rh"></td><td class="id">53</td><td>Victoria Medica...</td><td>victoria@gov.uk</td><td>1642679681</td><td class="n">NULL</td><td>0</td><td>The Health Cen...</td><td>37</td><td class="n">NULL</td><td>GP Surgery</td></tr>
            <tr><td class="rh"></td><td class="id">54</td><td>Queenstree Pra...</td><td>queeensway@g...</td><td>1642553389</td><td class="n">NULL</td><td>0</td><td>Queensway</td><td>38</td><td class="n">NULL</td><td>GP Surgery</td></tr>
            <tr><td class="rh"></td><td class="id">55</td><td>EAGLESCLIFFE ...</td><td>eagles@gmail.c...</td><td>1642780113</td><td class="n">NULL</td><td>0</td><td>Eaglescliff GP</td><td>39</td><td class="n">NULL</td><td>GP Surgery</td></tr>
            <tr><td class="rh"></td><td class="id">56</td><td>Specsavers Opti...</td><td>Specs@gmail.c...</td><td>164222234</td><td class="n">NULL</td><td>0</td><td>Specsavers Mid...</td><td>40</td><td>3</td><td>Optitian</td></tr>
            <tr><td class="rh"></td><td class="id">58</td><td>Specsavers Stoc...</td><td>specStock@gm...</td><td>1642602020</td><td class="n">NULL</td><td>0</td><td>Specsavers Stoc...</td><td>42</td><td class="n">NULL</td><td>Optitian</td></tr>
            <tr><td class="rh"></td><td class="id">59</td><td>Specsavers Harl...</td><td>specHartl@gm...</td><td>1429233444</td><td class="n">NULL</td><td>0</td><td class="n">NULL</td><td>43</td><td class="n">NULL</td><td>Optitian</td></tr>
            <tr><td class="rh"></td><td class="id">60</td><td>Specsavers Darl...</td><td>darloSepcs@g...</td><td>1325461155</td><td class="n">NULL</td><td>1325461155</td><td>Specsavers Darl...</td><td>44</td><td class="n">NULL</td><td>Optitian</td></tr>
            <tr><td class="rh"></td><td class="id">62</td><td>James Cook Un...</td><td>jamescookhosp...</td><td>1642850850</td><td class="n">NULL</td><td>0</td><td>James Cook Ho...</td><td>45</td><td class="n">NULL</td><td>Hospital</td></tr>
          </tbody>
        </table>
      </div>
      <div class="sbar sb-doc"><svg class="i16"><use href="#chev"/></svg><span class="thumb"></span><span class="grow"></span><svg class="i16"><use href="#chevd"/></svg></div>
    </div>
    <div class="navbar">
      <svg class="i16 nav-first"><use href="#first"/></svg>
      <svg class="i16 nav-prev"><use href="#prev"/></svg>
      <span class="nsep"></span>
      <span class="navinput">19</span>
      <span class="navof">of 200</span>
      <span class="nsep"></span>
      <svg class="i16 nav-next"><use href="#next"/></svg>
      <svg class="i16 nav-last"><use href="#last"/></svg>
      <svg class="i16 nav-new"><use href="#newrow"/></svg>
      <span class="nsep"></span>
      <svg class="i16 nav-stop"><use href="#stopc"/></svg>
      <span class="nsep"></span>
      <span class="grow"></span>
      <span class="nsep"></span>
      <span class="nav-gap"></span>
      <span class="nsep"></span>
    </div>
    <div class="band bottom"></div>
  </section>

  <aside class="panel props">
    <div class="phead"><span class="ptitle">Properties</span><span class="pctl"><span class="darr"></span><svg class="ipin"><use href="#pin"/></svg><svg class="ix"><use href="#closex"/></svg></span></div>
    <div class="pcombo"><span class="pcombo-text">[Qry] Query1.dtq</span><span class="pcombo-arr"></span></div>
    <div class="ptb">
      <span class="ptb-btn on"><svg class="i16"><use href="#cats"/></svg></span>
      <span class="ptb-btn"><svg class="i16"><use href="#az"/></svg></span>
      <span class="psep"></span>
      <span class="ptb-btn"><svg class="i16"><use href="#page"/></svg></span>
    </div>
    <div class="pgrid">
      <div class="pg group"><span class="tri"></span><span class="gname">(Identity)</span></div>
      <div class="pg grey"><span class="pm"></span><span class="pk">(Name)</span><span class="pv">Query1.dtq</span></div>
      <div class="pg grey"><span class="pm"></span><span class="pk">Database Name</span><span class="pv">j9206258</span></div>
      <div class="pg grey"><span class="pm"></span><span class="pk">Server Name</span><span class="pv">scm-database</span></div>
      <div class="pg group"><span class="tri"></span><span class="gname">Query Designer</span></div>
      <div class="pg grey"><span class="pm"></span><span class="pk">Destination Table</span><span class="pv"></span></div>
      <div class="pg"><span class="pm"></span><span class="pk">Distinct Values</span><span class="pv">No</span></div>
      <div class="pg grey"><span class="pm"></span><span class="pk">GROUP BY Extensi</span><span class="pv">&lt;None&gt;</span></div>
      <div class="pg"><span class="pm"></span><span class="pk">Output All Colum</span><span class="pv">No</span></div>
      <div class="pg grey"><span class="pm"></span><span class="pk">Query Parameter l</span><span class="pv">No parameters have been specified</span></div>
      <div class="pg"><span class="pm"></span><span class="pk">SQL Comment</span><span class="pv">***** Script for SelectTopNRows</span></div>
      <div class="pg"><span class="pm"><span class="tri-open"></span></span><span class="pk">Top Specification</span><span class="pv">Yes</span></div>
    </div>
    <div class="pdesc"><b>(Identity)</b></div>
  </aside>
</main>

<footer class="status">Ready</footer>
</body>
</html>
```

FILE: styles.css
```css
* { box-sizing: border-box; }
html, body { margin: 0; height: 100%; }
body {
  width: 1920px; height: 1040px; overflow: hidden;
  display: flex; flex-direction: column;
  font: 11.3px/18px "Open Sans", "Noto Sans", sans-serif;
  color: #000; background: #293955;
}
.defs { position: absolute; width: 0; height: 0; }
u { text-decoration: underline; text-underline-offset: 1px; }
.grow { flex: 1; }
.i16 { width: 16px; height: 16px; display: block; flex: none; }
.i10 { width: 10px; height: 10px; display: block; }

/* title bar */
.titlebar {
  flex: none; height: 23px; background: #e6b47e; border-bottom: 1px solid #c89b6a;
  display: flex; align-items: center; justify-content: center; position: relative;
}
.appicon { position: absolute; left: 2px; top: 2px; width: 17px; height: 17px; }
.title { font-size: 14.5px; color: #3a352e; line-height: 22px; }
.winctl { position: absolute; right: 3px; top: 0; width: 92px; height: 19px; display: flex; align-items: flex-start; }
.wmin { width: 7px; height: 2px; background: #2c2c2c; margin: 11px 0 0 3px; }
.wmax { width: 8px; height: 9px; border: 1px solid #2c2c2c; border-top-width: 2px; margin: 5px 0 0 19px; box-shadow: 2px -2px 0 -1px #2c2c2c; }
.wclose { width: 45px; height: 19px; background: #c75050; color: #fff; margin-left: 10px; display: flex; align-items: center; justify-content: center; }

/* menu */
.menubar {
  flex: none; height: 20px; display: flex; align-items: center;
  background: linear-gradient(#c4cfdf, #a3b0c6); color: #1b2a41;
}
.mi { font-size: 11.4px; line-height: 20px; }
.m1 { margin-left: 7px; width: 32px; } .m2 { width: 34px; } .m3 { width: 39px; } .m4 { width: 51px; }
.m5 { width: 49px; } .m6 { width: 95px; } .m7 { width: 43px; } .m8 { width: 58px; }

/* toolbars */
.toolarea {
  flex: none; height: 52px; background: #9caac1; padding: 0 0 0 2px;
}
.toolbar {
  display: flex; align-items: center; background: #bdc8d9; border-radius: 3px; position: relative;
  border-bottom: 1px solid #a9b5c8;
}
.tb1 { height: 24px; width: 1191px; margin-bottom: 2px; }
.tb2 { height: 24px; width: 336px; }
.grip {
  width: 3px; height: 16px; margin: 0 3px 0 3px; flex: none;
  background: radial-gradient(circle, #4b5a74 0 1px, transparent 1.2px) 0 0 / 3px 4px;
}
.btn { width: 22px; height: 22px; flex: none; display: flex; align-items: center; justify-content: center; }
.btn.gapl { margin-left: 2px; }
.dis svg { opacity: .75; }
.arr { width: 14px; height: 4px; flex: none; position: relative; }
.arr.narrow { width: 11px; }
.arr::after {
  content: ""; position: absolute; left: 50%; top: 0; margin-left: -3px;
  border: 3px solid transparent; border-top: 3px solid #1b2a41; border-bottom: 0;
}
.arr.off::after { border-top-color: #8894a8; }
.arr.inl { display: inline-block; width: 9px; vertical-align: 2px; }
.sep { width: 6px; height: 20px; flex: none; position: relative; }
.sep::after { content: ""; position: absolute; left: 2px; top: 0; width: 1px; height: 20px; background: #8592a8; }
.tlabel { font-size: 11.4px; color: #1b2a41; white-space: nowrap; flex: none; }
.newq { width: 68px; padding-left: 1px; }
.ctype { width: 89px; padding-left: 5px; }
.combo {
  height: 19px; flex: none; border: 1px solid #aab6c8; background: #cfd8e6; position: relative; border-radius: 1px;
}
.c1 { width: 90px; margin-left: 5px; }
.c2 { width: 160px; margin-left: 6px; margin-right: 4px; }
.c3 { width: 184px; margin-left: 4px; margin-right: 4px; background: #fff; border-color: #8c9ab0; }
.carr { position: absolute; right: 5px; top: 7px; border: 3px solid transparent; border-top: 3px solid #1a1a1a; border-bottom: 0; }
.carr.off { border-top-color: #9aa5b6; }
.chevend { width: 10px; height: 24px; flex: none; position: relative; background: #cdd5e2; border-radius: 0 3px 3px 0; margin-left: auto; }
.chevend::after {
  content: ""; position: absolute; left: 2px; top: 15px; width: 7px;
  border-top: 1px solid #222; height: 5px;
  background: linear-gradient(135deg, transparent 50%, #222 50%) left / 50% 100% no-repeat, linear-gradient(225deg, transparent 50%, #222 50%) right / 50% 100% no-repeat;
  transform: rotate(180deg);
}

/* dock */
.dock {
  flex: none; height: 921px; display: flex; gap: 6px; padding: 6px 6px 5px 6px;
  background: repeating-conic-gradient(#2f4160 0 25%, #293955 0 50%) 0 0 / 2px 2px;
}
.panel { display: flex; flex-direction: column; flex: none; }
.oe { width: 406px; margin-right: 1px; }
.props { width: 250px; }
.phead {
  flex: none; height: 19px; display: flex; align-items: center; justify-content: space-between;
  background: linear-gradient(#4e6286, #3f5479); color: #e6ecf6; border-radius: 2px 2px 0 0;
}
.ptitle { font-size: 11.4px; padding-left: 2px; line-height: 19px; }
.pctl { display: flex; align-items: center; color: #d4dcea; width: 46px; }
.darr { border: 4px solid transparent; border-top: 5px solid #d4dcea; border-bottom: 0; margin-right: 7px; }
.ipin { width: 10px; height: 13px; margin-right: 6px; }
.ix { width: 11px; height: 11px; }
.ptools {
  flex: none; height: 27px; display: flex; align-items: center; background: #bac6d8;
  padding-left: 7px; border-bottom: 1px solid #8f9aac;
}
.conn { width: 60px; }
.pbtn { width: 22px; height: 20px; display: flex; align-items: center; justify-content: center; flex: none; }
.treewrap {
  flex: 1; min-height: 0; display: flex; background: #fff;
  border-left: 1px solid #aab; border-right: 1px solid #a0a0a0; border-bottom: 1px solid #a0a0a0;
}
.tree { flex: 1; overflow: hidden; font-size: 11.4px; }
.tr { height: 18px; display: flex; align-items: center; white-space: nowrap; }
.exp { width: 9px; height: 9px; flex: none; margin-right: 7px; }
.tr span { margin-left: 5px; color: #0a0a1e; }
.d1 { padding-left: 45px; }
.d2 { padding-left: 65px; }
.d3 { padding-left: 84px; }
.sbar { flex: none; width: 16px; background: #f0f0f0; display: flex; flex-direction: column; }
.thumb { display: block; background: #cdcdcd; flex: none; }
.sb-oe .thumb { margin-top: 29px; height: 49px; }
.sb-oe .i16:first-child { margin-top: 2px; }
.sb-doc .thumb { margin-top: 1px; height: 155px; }

/* doc */
.doc { width: 1240px; flex: none; display: flex; flex-direction: column; }
.tabs { flex: none; height: 20px; display: flex; position: relative; color: #e3e9f4; font-size: 11.6px; line-height: 20px; }
.tab { padding-left: 5px; white-space: nowrap; overflow: hidden; flex: none; }
.tab:nth-child(1) { width: 235px; padding-left: 4px; }
.tab:nth-child(2) { width: 244px; }
.tab:nth-child(3) { width: 246px; }
.tab:nth-child(4) { width: 242px; }
.tab:nth-child(5) { width: 250px; }
.tab.active {
  background: linear-gradient(#fff8e0, #ffe9ac); color: #1c1c1c; display: flex; justify-content: space-between;
  align-items: center; border-radius: 2px 2px 0 0; padding-right: 4px;
}
.tabx { width: 10px; height: 10px; color: #6a6a6a; }
.tabmenu { position: absolute; right: 4px; top: 4px; width: 10px; height: 12px; border-top: 2px solid #d8dfe9; }
.tabmenu::after { content: ""; position: absolute; left: 0; top: 3px; border: 5px solid transparent; border-top: 5px solid #d8dfe9; border-bottom: 0; }
.band { flex: none; height: 4px; background: #ffe8a6; }
.band.bottom { border-radius: 0 0 2px 2px; }
.gridwrap { flex: 1; min-height: 0; display: flex; background: #fff; }
.gridscroll { flex: 1; overflow: hidden; }
.grid { border-collapse: separate; border-spacing: 0; table-layout: fixed; width: 1041px; font-size: 11.2px; line-height: 15px; }
.grid th, .grid td {
  width: 100px; height: 22px; padding: 0 0 2px 3.5px; overflow: hidden; white-space: nowrap; text-align: left;
  border-right: 1px solid #eef0f3; border-bottom: 1px solid #eef0f3;
}
.grid th {
  font-weight: 400; padding-left: 8px; padding-bottom: 0; color: #222; background: linear-gradient(#fff, #f8f9fc);
  border-right-color: #dfe9f6; border-bottom: 2px solid #a7a7a7;
}
.grid .rh { width: 40px; background: #fff; border-right: 1px solid #a8a8a8; border-bottom-color: #e8f0fa; padding: 0; }
.grid th.rh { border-right-color: #dfe3ea; border-bottom-color: #a7a7a7; }
.grid .cur { position: relative; }
.rowarrow { position: absolute; left: 8px; top: 6px; border: 5px solid transparent; border-left: 5px solid #404040; border-right: 0; }
.grid .id { color: #6d625a; }
.grid .n { font-style: italic; }
.sel { background: #3399ff; color: #fff; border-right: 2px solid #d87a20; display: inline-block; height: 13px; line-height: 13px; padding-right: 1px; }
.navbar {
  flex: none; height: 25px; display: flex; align-items: center;
  background: linear-gradient(#ffffff, #f1f1f1); padding: 0 3px 2px 2px; color: #111;
}
.nsep { width: 1px; height: 17px; background: #b0b0b0; flex: none; }
.nav-first { margin-right: 8px; }
.nav-prev { margin-right: 7px; }
.navinput { width: 50px; height: 23px; line-height: 22px; background: #fff; padding-left: 3px; margin-left: 3px; flex: none; }
.navof { width: 40px; padding-left: 4px; flex: none; margin-right: 0; }
.nav-next { margin-left: 6px; margin-right: 8px; }
.nav-last { margin-right: 2px; }
.nav-new { margin-right: 9px; }
.nav-stop { margin-left: 8px; margin-right: 7px; }
.nav-gap { width: 51px; }

/* properties */
.pcombo {
  flex: none; height: 30px; background: #fff; display: flex; align-items: center; justify-content: space-between;
  border-bottom: 3px solid #e5e8ee; padding: 0 4px 0 5px;
  border-top: 3px solid #e5e8ee;
}
.pcombo-text { font-weight: 700; font-size: 11.4px; color: #111; }
.pcombo-arr { width: 11px; height: 23px; background: #eeeeee; position: relative; }
.pcombo-arr::after { content: ""; position: absolute; left: 2px; top: 10px; border: 3px solid transparent; border-top: 3px solid #111; border-bottom: 0; }
.ptb {
  flex: none; height: 25px; background: #b6c2d5; display: flex; align-items: center; padding-left: 3px;
  border-bottom: 1px solid #8f949c;
}
.ptb-btn { width: 22px; height: 22px; display: flex; align-items: center; justify-content: center; flex: none; border: 1px solid transparent; }
.ptb-btn.on { background: #ffeebb; border-color: #e5c365; }
.psep { width: 1px; height: 20px; background: #858f9e; margin: 0 5px; flex: none; }
.pgrid { flex: 1; min-height: 0; background: #fff; border-left: 1px solid #a0a0a0; border-right: 1px solid #a0a0a0; overflow: hidden; font-size: 11.2px; border-bottom: 1px solid #a0a0a0; padding-top: 1px; }
.pg { height: 19px; display: flex; align-items: center; white-space: nowrap; overflow: hidden; }
.pg.group { background: #eeeeee; color: #a8afbe; font-weight: 700; }
.pm { width: 21px; height: 19px; background: #eeeeee; flex: none; position: relative; }
.pk { width: 99px; height: 19px; line-height: 18px; padding-left: 3px; flex: none; border-right: 1px solid #e6e6e6; border-bottom: 1px solid #e6e6e6; overflow: hidden; }
.pv { flex: 1; height: 19px; line-height: 18px; padding-left: 3px; overflow: hidden; border-bottom: 1px solid #e6e6e6; }
.grey .pk, .grey .pv { color: #6d6d6d; }
.tri { width: 7px; height: 7px; margin: 0 11px 0 8px; flex: none; background: linear-gradient(135deg, transparent 50%, #3c3c3c 50%); }
.gname { padding-left: 0; }
.tri-open { position: absolute; left: 9px; top: 4px; border: 5px solid transparent; border-left: 5px solid #fff; border-right: 0; filter: drop-shadow(-1px 0 0 #8a8a8a) drop-shadow(1px 0 0 #8a8a8a); }
.pdesc {
  flex: none; height: 60px; margin-top: 3px; background: #dfe2ea; border: 1px solid #a0a0a0; border-top: 2px solid #a0a0a0;
  padding: 2px 5px; font-size: 11.2px; color: #111;
}

/* status */
.status { flex: 1; background: #293955; color: #e0e6f0; padding: 4px 0 0 4px; font-size: 11.4px; line-height: 18px; }
```
